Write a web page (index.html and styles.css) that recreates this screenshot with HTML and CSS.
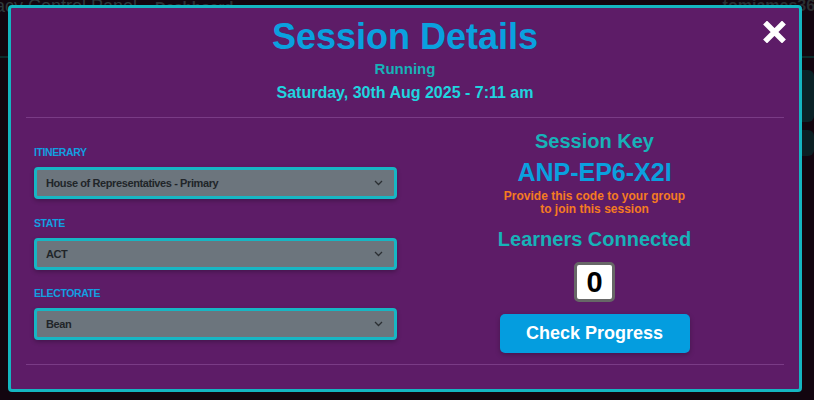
FILE: index.html
```html
<!DOCTYPE html>
<html lang="en">
<head>
  <meta charset="UTF-8">
  <meta name="viewport" content="width=device-width, initial-scale=1.0">
  <title>Session Details</title>
  <link rel="stylesheet" href="styles.css">
</head>
<body>
  <div class="page">
    <header class="topbar">
      <span class="brand">Democracy Control Panel</span>
      <span class="nav-link">Dashboard</span>
      <span class="user">tomjames365</span>
    </header>
    <main class="content">
      <div class="panel"></div>
      <div class="panel small"></div>
    </main>
  </div>

  <div class="backdrop">
    <div class="modal">
      <button class="close" type="button" aria-label="Close">
        <svg width="23" height="22" viewBox="0 0 23 22">
          <path d="M4 3.5 L19 18.5 M19 3.5 L4 18.5" stroke="#fff" stroke-width="5.5" stroke-linecap="square" fill="none"/>
        </svg>
      </button>

      <div class="modal-header">
        <h1>Session Details</h1>
        <p class="status">Running</p>
        <p class="date">Saturday, 30th Aug 2025 - 7:11 am</p>
      </div>

      <div class="modal-body">
        <div class="col settings">
          <label>Itinerary</label>
          <div class="select">
            <span>House of Representatives - Primary</span>
            <svg width="9" height="6" viewBox="0 0 9 6"><path d="M1 1 L4.5 4.5 L8 1" stroke="#2b2f33" stroke-width="1.3" fill="none"/></svg>
          </div>
          <label>State</label>
          <div class="select">
            <span>ACT</span>
            <svg width="9" height="6" viewBox="0 0 9 6"><path d="M1 1 L4.5 4.5 L8 1" stroke="#2b2f33" stroke-width="1.3" fill="none"/></svg>
          </div>
          <label>Electorate</label>
          <div class="select">
            <span>Bean</span>
            <svg width="9" height="6" viewBox="0 0 9 6"><path d="M1 1 L4.5 4.5 L8 1" stroke="#2b2f33" stroke-width="1.3" fill="none"/></svg>
          </div>
        </div>

        <div class="col session">
          <h2>Session Key</h2>
          <div class="key">ANP-EP6-X2I</div>
          <p class="hint">Provide this code to your group<br>to join this session</p>
          <h2 class="learners">Learners Connected</h2>
          <div class="count">0</div>
          <button class="progress" type="button">Check Progress</button>
        </div>
      </div>

      <div class="modal-footer"></div>
    </div>
  </div>
</body>
</html>
```

FILE: styles.css
```css
body {
  margin: 0;
  height: 100vh;
  overflow: hidden;
  background-color: #12050f;
  font-family: "Liberation Sans", Arial, sans-serif;
}

/* page behind the dialog */
.page {
  height: 100%;
}
.topbar {
  display: flex;
  align-items: center;
  height: 12px;
  padding-bottom: 44px;
  border-bottom: 2px solid #0b2a2b;
  color: #2f393b;
  white-space: nowrap;
}
.brand {
  font-size: 18px;
  margin-left: -68px;
}
.nav-link {
  font-size: 15px;
  font-weight: bold;
  margin-left: 18px;
  color: #2d3134;
}
.user {
  margin-left: auto;
  margin-right: -10px;
  font-size: 16px;
  font-weight: bold;
  color: #2a2e31;
}
.content {
  display: flex;
  flex-direction: column;
  align-items: flex-end;
  gap: 8px;
  padding: 12px 0 0;
}
.panel {
  width: 60px;
  height: 52px;
  background-color: #0a2227;
  border-radius: 6px;
}
.panel.small {
  height: 26px;
  background-color: #0b1f24;
}

/* dialog */
.backdrop {
  position: fixed;
  inset: 0;
  padding: 5px 12px 8px 8px;
}
.modal {
  position: relative;
  box-sizing: border-box;
  height: 100%;
  display: flex;
  flex-direction: column;
  background-color: #5d1c67;
  border: 3px solid #14b5c1;
  border-radius: 4px;
}
.close {
  position: absolute;
  top: 13px;
  right: 13px;
  padding: 0;
  border: none;
  background: none;
  line-height: 0;
  cursor: pointer;
}
.modal-header {
  margin: 0 15px;
  padding: 9px 0 13px;
  border-bottom: 1px solid #7a3b86;
  text-align: center;
}
.modal-header h1 {
  margin: 0;
  font-size: 36px;
  line-height: 40px;
  color: #0aa0df;
}
.status {
  margin: 1.5px 0 0;
  font-size: 15px;
  line-height: 20px;
  font-weight: bold;
  color: #17b2b8;
}
.date {
  margin: 3.5px 0 0;
  font-size: 16px;
  line-height: 22px;
  font-weight: bold;
  color: #1fd4df;
}

.modal-body {
  display: grid;
  grid-template-columns: 1fr 1fr;
  margin: 0 15px;
  padding: 11px 0;
  border-bottom: 1px solid #7a3b86;
}
.col {
  padding: 0 8px;
}
.settings {
  display: flex;
  flex-direction: column;
  margin-top: 16px;
}
.settings label {
  font-size: 10.5px;
  line-height: 14px;
  font-weight: bold;
  letter-spacing: -0.4px;
  text-transform: uppercase;
  color: #129fe0;
  margin-bottom: 8px;
}
.select {
  box-sizing: border-box;
  height: 32px;
  display: flex;
  align-items: center;
  justify-content: space-between;
  padding: 0 11px 0 9px;
  margin-bottom: 16.5px;
  background-color: #6c757d;
  border: 3px solid #17b6c4;
  border-radius: 4px;
  box-shadow: 0 2px 4px rgba(0, 0, 0, 0.25);
  font-size: 11px;
  font-weight: bold;
  letter-spacing: -0.4px;
  color: #212529;
}
.select:last-child {
  margin-bottom: 0;
}

.session {
  display: flex;
  flex-direction: column;
  align-items: center;
  text-align: center;
}
.session h2 {
  margin: 0;
  font-size: 20px;
  line-height: 24px;
  color: #17b2b8;
}
.key {
  margin-top: 3.8px;
  font-size: 25px;
  line-height: 30px;
  font-weight: bold;
  color: #0aa0df;
}
.hint {
  margin: 3.5px 0 0;
  font-size: 12px;
  line-height: 13px;
  font-weight: bold;
  color: #f57b22;
}
.session h2.learners {
  margin-top: 10.7px;
}
.count {
  box-sizing: border-box;
  width: 41px;
  height: 40px;
  margin-top: 10.6px;
  background-color: #fff;
  border: 3px solid #676767;
  border-radius: 5px;
  font-size: 29px;
  line-height: 34px;
  font-weight: bold;
  color: #000;
}
.progress {
  width: 190px;
  height: 39px;
  margin-top: 12px;
  border: none;
  border-radius: 5px;
  background-color: #049ddf;
  box-shadow: 0 2px 5px rgba(0, 0, 0, 0.25);
  color: #fff;
  font-family: "Liberation Sans", Arial, sans-serif;
  font-size: 18px;
  font-weight: bold;
  cursor: pointer;
}
.modal-footer {
  flex: 1;
}
```
